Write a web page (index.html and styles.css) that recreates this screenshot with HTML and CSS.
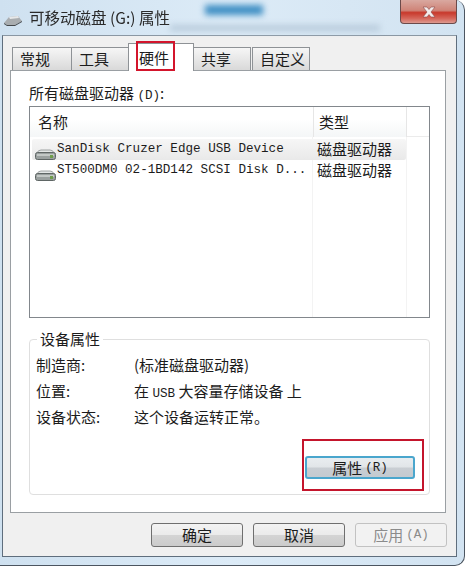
FILE: index.html

```html
<!DOCTYPE html>
<html lang="zh-CN">
<head>
    <meta charset="UTF-8">
    <title>可移动磁盘 (G:) 属性</title>
    <link rel="stylesheet" href="styles.css">
</head>
<body>
    <div class="window">
        <div class="glass-smear smear-top"></div>
        <div class="glass-smear smear-low"></div>
        <div class="titlebar">
            <svg class="title-icon" width="20" height="12" viewBox="0 0 20 12">
                <path d="M1 9 L6 3 L15 2 L19 7 L12 11 L4 11 Z" fill="#a9adb0"/>
                <path d="M1 9 L4 11 L12 11 L19 7 L19 8 L12 12 L4 12 L1 10 Z" fill="#44484b"/>
                <path d="M6 3 L15 2 L16 4 L7 5 Z" fill="#e6e8e9"/>
            </svg>
            <span class="title-text">可移动磁盘 (G:) 属性</span>
            <div class="close-button">
                <svg width="18" height="12" viewBox="0 0 18 12">
                    <path d="M3 1 L7 1 L9 3.5 L11 1 L15 1 L11 6 L15 11 L11 11 L9 8.5 L7 11 L3 11 L7 6 Z" fill="#f3ecec" stroke="#8c4a4a" stroke-width="0.6"/>
                </svg>
            </div>
        </div>
        <div class="client">
            <div class="tabs">
                <div class="tab tab-first">常规</div>
                <div class="tab">工具</div>
                <div class="tab tab-active">硬件<span class="highlight"></span></div>
                <div class="tab">共享</div>
                <div class="tab tab-last">自定义</div>
            </div>
            <div class="sheet">
                <div class="list-label">所有磁盘驱动器 <span class="small-latin">(D)</span>:</div>
                <div class="list-box">
                    <div class="list-head">
                        <div class="head-cell">名称</div>
                        <div class="head-cell head-type">类型</div>
                    </div>
                    <div class="list-rows">
                        <div class="list-row row-selected">
                            <svg class="drive-icon" width="21" height="11" viewBox="0 0 21 11">
                                <path d="M2 4 Q3 1 6 1 L15 1 Q18 1 19 4 Z" fill="#e3e6e6" stroke="#8b9090" stroke-width="0.8"/>
                                <rect x="0.5" y="3.5" width="20" height="7" rx="2" fill="#9aa09f" stroke="#5f6665"/>
                                <rect x="2" y="5" width="17" height="2" fill="#c3c8c6"/>
                                <rect x="15" y="6" width="3" height="3" fill="#6f9d4c"/>
                            </svg>
                            <span class="row-name">SanDisk Cruzer Edge USB Device</span>
                            <span class="row-type">磁盘驱动器</span>
                        </div>
                        <div class="list-row">
                            <svg class="drive-icon" width="21" height="11" viewBox="0 0 21 11">
                                <path d="M2 4 Q3 1 6 1 L15 1 Q18 1 19 4 Z" fill="#e3e6e6" stroke="#8b9090" stroke-width="0.8"/>
                                <rect x="0.5" y="3.5" width="20" height="7" rx="2" fill="#9aa09f" stroke="#5f6665"/>
                                <rect x="2" y="5" width="17" height="2" fill="#c3c8c6"/>
                                <rect x="15" y="6" width="3" height="3" fill="#6f9d4c"/>
                            </svg>
                            <span class="row-name">ST500DM0 02-1BD142 SCSI Disk D...</span>
                            <span class="row-type">磁盘驱动器</span>
                        </div>
                    </div>
                </div>
                <fieldset class="group">
                    <legend>设备属性</legend>
                    <div class="props">
                        <div class="prop-name">制造商:</div>
                        <div class="prop-value">(标准磁盘驱动器)</div>
                        <div class="prop-name">位置:</div>
                        <div class="prop-value">在 <span class="small-latin">USB</span> 大容量存储设备 上</div>
                        <div class="prop-name">设备状态:</div>
                        <div class="prop-value">这个设备运转正常。</div>
                    </div>
                    <div class="group-actions">
                        <div class="button button-focus">属性 <span class="small-latin">(R)</span><span class="highlight highlight-wide"></span></div>
                    </div>
                </fieldset>
            </div>
            <div class="footer">
                <div class="button">确定</div>
                <div class="button">取消</div>
                <div class="button button-off">应用 <span class="small-latin">(A)</span></div>
            </div>
        </div>
    </div>
</body>
</html>
```

FILE: styles.css

```css
html, body {
    margin: 0;
    padding: 0;
    background-color: #fff;
}
body {
    width: 466px;
    height: 566px;
    overflow: hidden;
    font-family: "Noto Sans CJK SC", "Liberation Sans", sans-serif;
    font-size: 15px;
    color: #1c1c1c;
}
.window {
    position: relative;
    box-sizing: border-box;
    width: 465px;
    height: 566px;
    padding: 0 7px 8px 2px;
    border-right: 1px solid #4c5560;
    border-bottom: 1px solid #4c5560;
    border-radius: 0 10px 10px 0;
    background: linear-gradient(90deg, #cfe1f0 0%, #dcebf7 50%, #d2e3f1 100%);
    filter: blur(0.5px);
}
.glass-smear {
    position: absolute;
    filter: blur(3px);
}
.smear-top {
    left: 205px;
    top: 5px;
    width: 58px;
    height: 10px;
    background-color: #3f8fc4;
}
.smear-low {
    left: 170px;
    top: 25px;
    width: 210px;
    height: 6px;
    background-color: #b7cada;
}

.titlebar {
    position: relative;
    display: flex;
    align-items: flex-start;
    height: 35px;
}
.title-icon {
    margin: 14px 6px 0 1px;
}
.title-text {
    margin-top: 6px;
    font-size: 15.5px;
    line-height: 22px;
    color: #2a2a2a;
}
.close-button {
    position: absolute;
    right: 0;
    top: 0;
    display: flex;
    align-items: center;
    justify-content: center;
    width: 57px;
    height: 24px;
    box-sizing: border-box;
    border: 1px solid #6b4a4a;
    border-top: none;
    border-radius: 0 0 4px 4px;
    background: linear-gradient(#d9a8a0 0%, #cf8478 45%, #c8392c 55%, #d5665a 80%, #dd9a90 100%);
}

.client {
    box-sizing: border-box;
    height: 522px;
    padding: 0 10px 0 7px;
    border: 1px solid #5f6e7d;
    border-top-color: #8a97a3;
    background-color: #f0f0f0;
}

.tabs {
    display: flex;
    align-items: flex-end;
    height: 34px;
    padding-left: 2px;
}
.tab {
    position: relative;
    box-sizing: border-box;
    display: flex;
    align-items: center;
    width: 58px;
    height: 23px;
    margin-right: -1px;
    padding-left: 7px;
    border: 1px solid #8e9296;
    border-bottom: none;
    background: linear-gradient(#f6f6f6, #d9d9d9);
    line-height: 22px;
}
.tab-first {
    width: 60px;
}
.tab-last {
    margin-left: 2px;
}
.tab-active {
    z-index: 1;
    width: 66px;
    height: 28px;
    margin-bottom: -1px;
    padding-left: 10px;
    background: #fff;
}
.highlight {
    position: absolute;
    left: 7px;
    top: -3px;
    width: 39px;
    height: 30px;
    box-sizing: border-box;
    border: 2px solid #d3152c;
}
.highlight-wide {
    left: -5px;
    top: -19px;
    width: 122px;
    height: 52px;
    border-color: #c4152c;
}

.sheet {
    box-sizing: border-box;
    display: flex;
    flex-direction: column;
    height: 443px;
    padding: 12px 15px 0 18px;
    border: 1px solid #9a9fa3;
    background-color: #fff;
}
.list-label {
    height: 23px;
    line-height: 20px;
}
.small-latin {
    font-family: "Liberation Mono", monospace;
    font-size: 12.6px;
}

.list-box {
    box-sizing: border-box;
    height: 212px;
    border: 1px solid #82878c;
}
.list-head {
    display: grid;
    grid-template-columns: 283px 94px;
    height: 29px;
    border-bottom: 1px solid #ebebeb;
}
.head-cell {
    padding-left: 8px;
    line-height: 30px;
    background: linear-gradient(#fff 40%, #f4f6f7);
}
.head-type {
    padding-left: 5px;
    border-left: 1px solid #e6e6e6;
    border-right: 1px solid #e6e6e6;
}
.list-rows {
    box-sizing: border-box;
    height: 180px;
    padding-top: 2px;
    background-image: linear-gradient(#f3f3f3, #f3f3f3), linear-gradient(#f3f3f3, #f3f3f3);
    background-size: 1px 100%;
    background-repeat: no-repeat;
    background-position: 282px 0, 376px 0;
}
.list-row {
    position: relative;
    display: flex;
    align-items: flex-start;
    width: 374px;
    height: 21px;
    margin-left: 2px;
}
.row-selected {
    background: linear-gradient(#f6f6f6, #e9e9e9);
    border-radius: 2px;
}
.drive-icon {
    align-self: flex-end;
    flex: none;
    margin: 0 1px 0 3px;
}
.row-name {
    width: 260px;
    flex: none;
    line-height: 21px;
    font-family: "Liberation Mono", monospace;
    font-size: 12.6px;
    white-space: nowrap;
}
.row-type {
    white-space: nowrap;
    line-height: 19px;
}

.group {
    box-sizing: border-box;
    height: 165px;
    margin: 12px 0 0;
    padding: 0 14px 0 6px;
    border: 1px solid #dfdfdf;
    border-radius: 4px;
}
.group legend {
    margin-left: 1px;
    padding: 0 3px;
    line-height: 18px;
}
.props {
    display: grid;
    grid-template-columns: 98px 1fr;
    grid-auto-rows: 26px;
    margin-top: 4px;
    line-height: 26px;
}
.group-actions {
    display: flex;
    justify-content: flex-end;
    margin-top: 26px;
}

.button {
    position: relative;
    box-sizing: border-box;
    display: flex;
    align-items: center;
    justify-content: center;
    gap: 3px;
    width: 92px;
    height: 24px;
    border: 1px solid #6f6f6f;
    border-radius: 3px;
    background: linear-gradient(#f3f3f3 0%, #ebebeb 48%, #d4d4d4 52%, #cbcbcb 100%);
    line-height: 22px;
}
.button-focus {
    width: 110px;
    height: 23px;
    border: 2px solid #4aa6cd;
    background: linear-gradient(#e9edf0 0%, #e1e5e8 48%, #c9ced3 52%, #c4cad0 100%);
}
.button-off {
    border-color: #c2c2c2;
    background: #f2f2f2;
    color: #8b8b8b;
}
.footer {
    display: flex;
    justify-content: flex-end;
    gap: 10px;
    margin-top: 10px;
    margin-right: -1px;
}
```
